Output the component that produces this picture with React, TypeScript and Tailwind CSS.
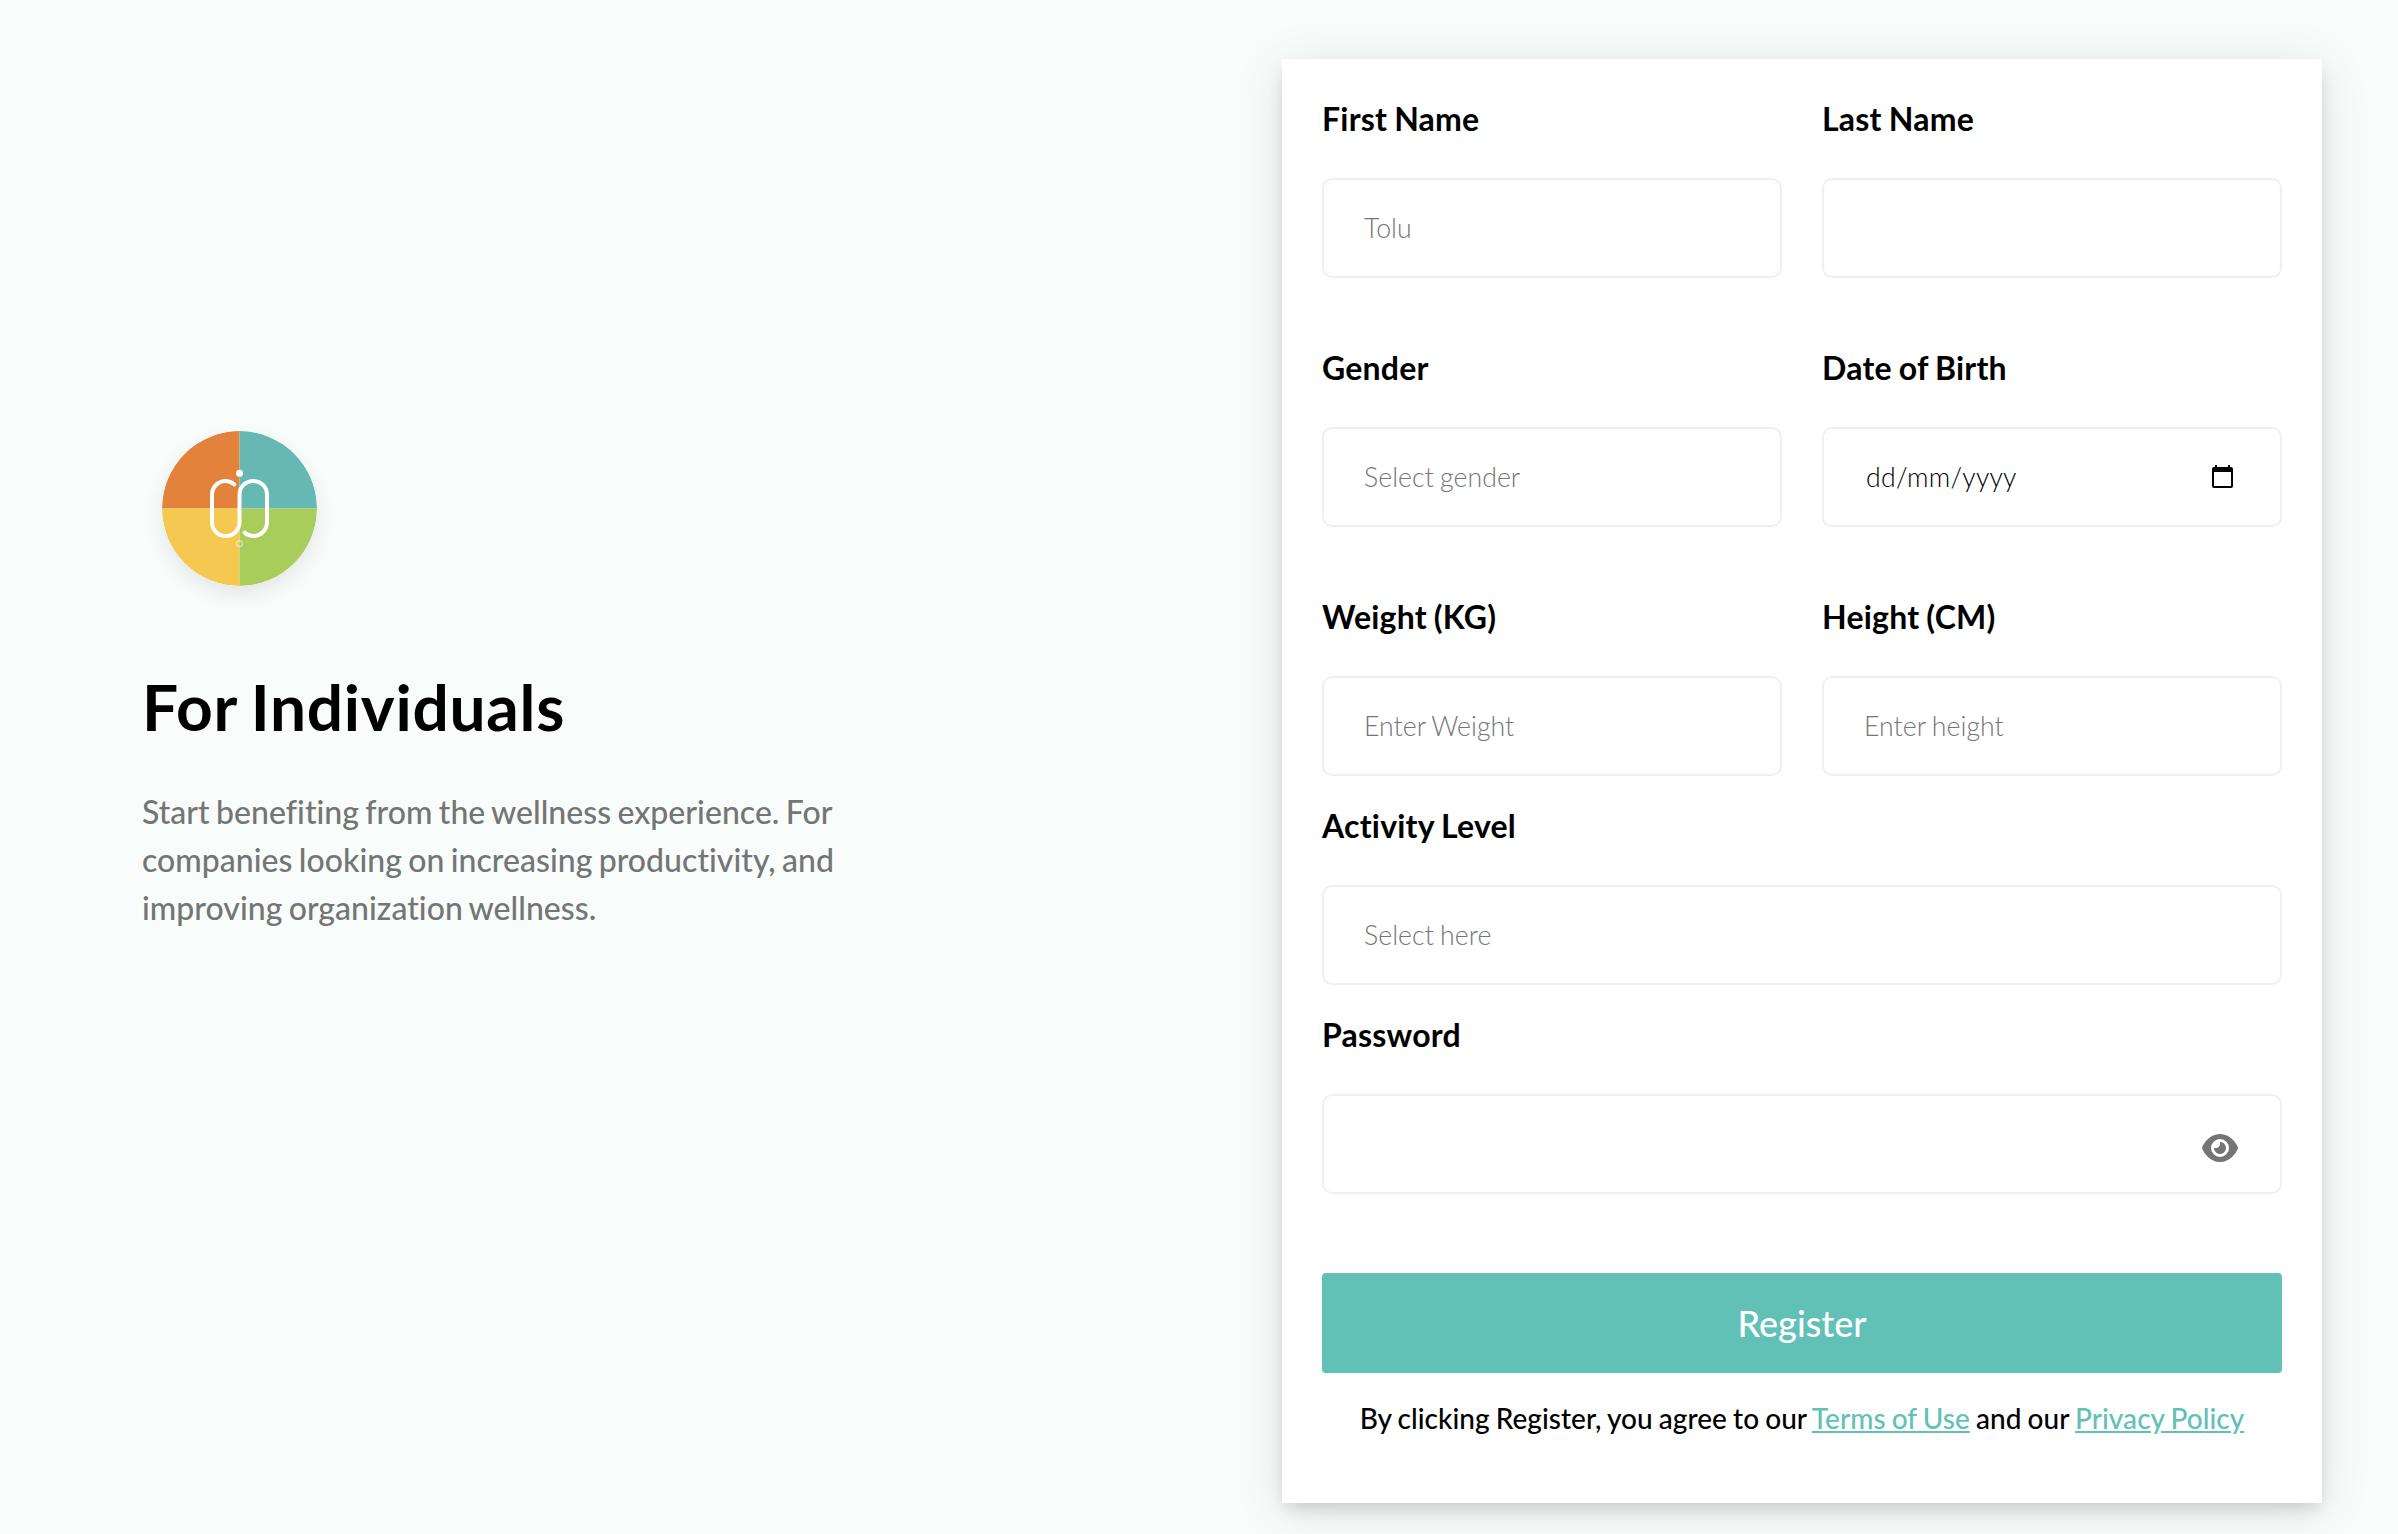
import type { ReactNode } from "react";
import { FaEye } from "react-icons/fa6";

function Logo() {
  return (
    <svg
      viewBox="96 62 465 465"
      className="ml-5 block size-[155px] rounded-full shadow-[0_8px_20px_rgba(0,0,0,0.09)]"
      fill="none"
    >
      <path d="M328.5 294.5V62A232.5 232.5 0 0 0 96 294.5Z" fill="#e2823b" />
      <path d="M328.5 294.5V62A232.5 232.5 0 0 1 561 294.5Z" fill="#65b9b2" />
      <path d="M328.5 294.5V527A232.5 232.5 0 0 1 96 294.5Z" fill="#f5c84f" />
      <path d="M328.5 294.5V527A232.5 232.5 0 0 0 561 294.5Z" fill="#a8cd5b" />
      <path
        d="M313 222C305 216 297 212 287 212A41 41 0 0 0 246 253V336A41 41 0 0 0 328.5 336V253A41 41 0 0 1 411 253V336A41 41 0 0 1 370 377C360 377 352 374 344 367"
        stroke="#fff"
        strokeWidth="12"
        strokeLinecap="round"
      />
      <circle cx="328.5" cy="189" r="10.5" fill="#fff" />
      <circle cx="328.5" cy="400" r="9" stroke="#fff" strokeOpacity="0.75" strokeWidth="3" />
    </svg>
  );
}

function CalendarIcon() {
  return (
    <svg viewBox="0 0 21 23" className="mr-[7px] mb-px block h-[23px] w-[21px]" fill="none">
      <path
        fillRule="evenodd"
        d="M3 0H5V2H16V0H18V2H19A2 2 0 0 1 21 4V21A2 2 0 0 1 19 23H2A2 2 0 0 1 0 21V4A2 2 0 0 1 2 2H3ZM2 7V21H19V7Z"
        fill="#000"
      />
    </svg>
  );
}

function Field({ label, placeholder, children }: { label: string; placeholder?: string; children?: ReactNode }) {
  return (
    <div className="flex flex-1 flex-col gap-[39px]">
      <label className="text-[32px] leading-10 font-bold tracking-[0.22px] [word-spacing:-1px]">{label}</label>
      <div className="flex h-[100px] items-center justify-between rounded-[10px] border-2 border-[#f0f0f0] bg-white px-10 text-[26.67px] font-light tracking-[0.06px] text-[#757575] [word-spacing:-1.2px]">
        {placeholder && <span>{placeholder}</span>}
        {children}
      </div>
    </div>
  );
}

export default function App() {
  return (
    <main className="flex h-[1534px] w-[2398px] items-start justify-between overflow-hidden bg-[#f8fdfb] pr-[76px] pl-[142px] font-[Lato,sans-serif] text-black">
      <section className="w-[760px] pt-[431px]">
        <Logo />
        <h1 className="mt-[81px] text-[64px] leading-[80px] font-bold tracking-[0.75px] [word-spacing:-2.5px]">
          For Individuals
        </h1>
        <p className="mt-[41px] text-[32px] leading-[48px] font-medium tracking-[0.03px] text-[#757575] [word-spacing:-1.8px]">
          Start benefiting from the wellness experience. For
          <br />
          companies looking on increasing productivity, and
          <br />
          improving organization wellness.
        </p>
      </section>

      <form className="mt-[59px] flex h-[1444px] w-[1040px] flex-col bg-white p-10 shadow-[0_8px_16px_-3px_rgba(0,0,0,0.15),0_8px_48px_rgba(0,0,0,0.1)]">
        <div className="flex flex-col gap-[70px]">
          <div className="flex gap-10">
            <Field label="First Name" placeholder="Tolu" />
            <Field label="Last Name" />
          </div>
          <div className="flex gap-10">
            <Field label="Gender" placeholder="Select gender" />
            <Field label="Date of Birth">
              <span className="pl-0.5 tracking-[0.25px] text-black">dd/mm/yyyy</span>
              <CalendarIcon />
            </Field>
          </div>
          <div className="flex gap-10">
            <Field label="Weight (KG)" placeholder="Enter Weight" />
            <Field label="Height (CM)" placeholder="Enter height" />
          </div>
        </div>
        <div className="mt-[30px] flex flex-col gap-[30px]">
          <Field label="Activity Level" placeholder="Select here" />
          <Field label="Password">
            <FaEye className="mt-2 mr-0.5 ml-auto h-8 w-9" />
          </Field>
        </div>
        <button type="button" className="mt-[79px] h-[100px] shrink-0 rounded bg-[#62c1b7] text-[36px] font-medium text-white">
          Register
        </button>
        <p className="mt-[25px] text-center text-[28px] leading-10 font-medium tracking-[0.03px] whitespace-nowrap [word-spacing:-1px]">
          By clicking Register, you agree to our{" "}
          <a className="text-[#62c1b7] underline">Terms of Use</a> and our{" "}
          <a className="text-[#62c1b7] underline">Privacy Policy</a>
        </p>
      </form>
    </main>
  );
}
